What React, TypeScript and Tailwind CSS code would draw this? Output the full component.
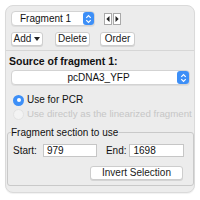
import React from "react";

const font = { fontFamily: '"Liberation Sans", Arial, sans-serif' };

function Stepper({ className = "" }: { className?: string }) {
  return (
    <div className={"flex items-center justify-center rounded-[3px] bg-[#3d8ff7] " + className}>
      <svg width="7" height="10" viewBox="0 0 7 10">
        <path d="M1.3 3.9 L3.5 1.7 L5.7 3.9" fill="none" stroke="white" strokeWidth="1.2" />
        <path d="M1.3 6.1 L3.5 8.3 L5.7 6.1" fill="none" stroke="white" strokeWidth="1.2" />
      </svg>
    </div>
  );
}

function Btn({ children, className = "" }: { children: React.ReactNode; className?: string }) {
  return (
    <div
      className={
        "flex h-[14px] items-center justify-center rounded-[3px] border border-[#cdcdcd] bg-white text-[10px] leading-none text-[#1a1a1a] shadow-[0_1px_0_rgba(0,0,0,0.1)] " +
        className
      }
    >
      {children}
    </div>
  );
}

export default function App() {
  return (
    <div className="h-[200px] w-[200px] bg-white p-[5px]" style={font}>
      <div className="flex h-[188px] w-[190px] flex-col rounded-[8px] border border-[#dadada] bg-[#ececec] shadow-[0_1px_1px_rgba(0,0,0,0.06)]">
        <div className="mt-[5px] flex items-center pl-[5px]">
          <div className="flex h-[15px] w-[84px] items-center justify-between rounded-[4px] border border-[#d3d3d3] bg-white pl-[8px] pr-0 text-[10px] leading-none text-[#111] shadow-[0_1px_0_rgba(0,0,0,0.06)]">
            <span>Fragment 1</span>
            <Stepper className="h-[13px] w-[11px]" />
          </div>
          <div className="ml-[9px] flex">
            <div className="flex h-[12px] w-[8px] items-center justify-center border border-[#a9a9a9] bg-white">
              <svg width="4" height="6" viewBox="0 0 4 6"><path d="M3.5 0 L0.3 3 L3.5 6 Z" fill="#222" /></svg>
            </div>
            <div className="ml-[1px] flex h-[12px] w-[8px] items-center justify-center border border-[#a9a9a9] bg-white">
              <svg width="4" height="6" viewBox="0 0 4 6"><path d="M0.5 0 L3.7 3 L0.5 6 Z" fill="#222" /></svg>
            </div>
          </div>
        </div>
        <div className="mt-[6px] flex items-center pl-[5px]">
          <Btn className="w-[32px] gap-[3px]">
            <span>Add</span>
            <svg width="6" height="4" viewBox="0 0 6 4"><path d="M0 0 L6 0 L3 4 Z" fill="#222" /></svg>
          </Btn>
          <Btn className="ml-[12px] w-[35px]">Delete</Btn>
          <Btn className="ml-[10px] w-[35px]">Order</Btn>
        </div>
        <div className="mt-[4px] h-px bg-[#d6d6d6]" />
        <div className="mt-[4px] pl-[3px] text-[10.5px] font-bold leading-[12px] text-[#111]">Source of fragment 1:</div>
        <div className="ml-[5px] mt-[3px] flex h-[15px] w-[179px] items-center rounded-[4px] border border-[#d3d3d3] bg-white text-[10px] leading-none text-[#111] shadow-[0_1px_0_rgba(0,0,0,0.06)]">
          <span className="flex-1 pl-[8px] text-center">pcDNA3_YFP</span>
          <Stepper className="h-[13px] w-[12px]" />
        </div>
        <div className="mt-[9px] flex h-[12px] items-center pl-[7px] text-[10px] leading-none text-[#111]">
          <div className="flex h-[11px] w-[11px] items-center justify-center rounded-full bg-[#3d8ff7]">
            <div className="h-[4px] w-[4px] rounded-full bg-white" />
          </div>
          <span className="ml-[3px]">Use for PCR</span>
        </div>
        <div className="mt-[2px] flex h-[12px] items-center pl-[7px] text-[9.7px] leading-none text-[#c6c6c6]">
          <div className="h-[11px] w-[11px] rounded-full border border-[#e2e2e2] bg-[#f3f3f3]" />
          <span className="ml-[3px] whitespace-nowrap">Use directly as the linearized fragment</span>
        </div>
        <div className="relative ml-[1px] mt-[12px] flex h-[54px] w-[187px] flex-col rounded-[3px] border border-[#c9c9c9] px-[5px] pt-[11px]">
          <span className="absolute -top-[6px] left-[3px] bg-[#ececec] pr-[1px] text-[10px] leading-[11px] text-[#111]">Fragment section to use</span>
          <div className="flex items-center text-[10px] leading-none text-[#111]">
            <span>Start:</span>
            <div className="ml-[6px] flex h-[13px] w-[54px] items-center border border-[#c6c6c6] bg-white pl-[3px]">979</div>
            <span className="ml-[9px]">End:</span>
            <div className="ml-[3px] flex h-[13px] w-[55px] items-center border border-[#c6c6c6] bg-white pl-[3px]">1698</div>
          </div>
          <div className="mt-[9px] flex pl-[77px]">
            <Btn className="w-[93px]">Invert Selection</Btn>
          </div>
        </div>
      </div>
    </div>
  );
}
